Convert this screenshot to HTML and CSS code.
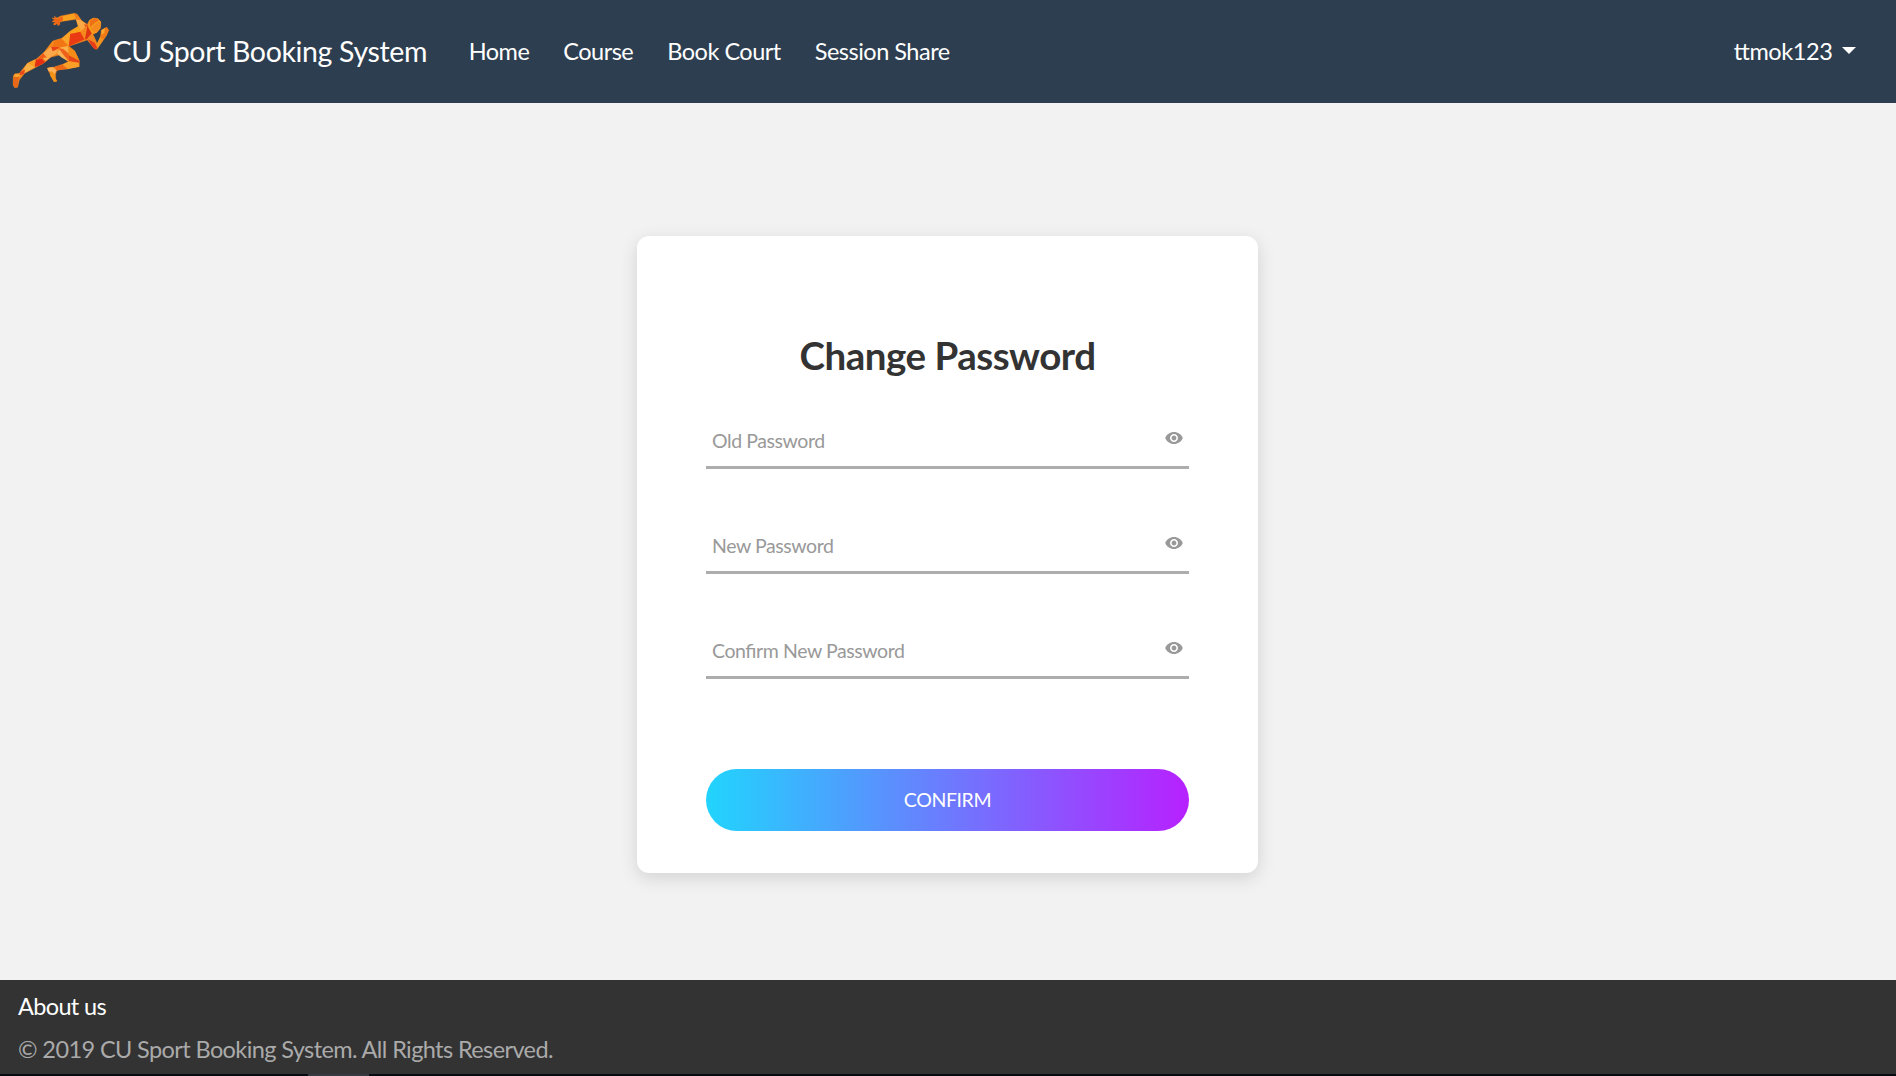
FILE: index.html
```html
<!DOCTYPE html>
<html lang="en">
<head>
<meta charset="utf-8">
<title>Change Password</title>
<link rel="stylesheet" href="styles.css">
</head>
<body>
<header class="navbar">
  <a class="brand">
    <svg class="logo" viewBox="0 0 338 309" aria-hidden="true">
      <path fill="#f5871c" stroke="#f5871c" stroke-width="1" stroke-linejoin="round" d="M156 54L166 55L163 49L171 54L182 48L222 40L231 42L246 63L262 73L268 61L280 54L294 56L303 66L301 85L290 98L279 103L286 118L292 132L301 111L304 90L312 86L320 82L326 91L320 106L311 119L291 148L282 145L262 120L207 139L224 152L238 182L238 200L180 209L170 212L167 222L167 235L171 244L162 245L146 214L142 204L163 201L188 193L205 185L178 165L152 172L126 192L104 204L74 220L58 240L53 262L44 263L39 254L40 227L45 221L58 220L82 190L108 178L132 157L158 123L185 115L212 92L235 79L228 58L188 64L179 67L179 73L174 77L172 70L164 75L160 72L167 66L156 65L165 60Z"/>
      <g>
        <path fill="#f9a01f" d="M182 50L222 41L229 43L226 57L186 64Z"/>
        <path fill="#ef6516" d="M155 54L165 57L163 49L171 57L188 49L189 60L179 66L180 73L175 77L173 69L166 75L161 73L168 65L156 64L165 59Z"/>
        <path fill="#f47b1c" d="M222 41L230 42L244 62L233 67Z"/>
        <path fill="#fba944" d="M228 58L244 61L261 75L243 94L235 82Z"/>
        <path fill="#e8531b" d="M252 73L264 74L278 86L271 91L260 88Z"/>
        <path fill="#f59a1c" d="M264 75L268 61L280 54L294 56L303 66L301 85L290 98L276 101L266 93Z"/>
        <path fill="#f07018" d="M269 63L284 54L298 60L285 68L270 82Z"/>
        <path fill="#f58a1f" d="M272 88L291 68L302 67L300 84L289 98Z"/>
        <path fill="#fba31b" d="M212 93L235 79L245 92L239 98L213 99Z"/>
        <path fill="#e93a13" d="M208 103L241 95L255 118L207 139Z"/>
        <path fill="#f5881e" d="M242 97L262 76L264 91L254 119Z"/>
        <path fill="#df3513" d="M262 78L276 101L261 118L255 118Z"/>
        <path fill="#f8a52a" d="M185 116L212 92L206 137Z"/>
        <path fill="#f37615" d="M158 139L166 121L185 116L204 138L177 144Z"/>
        <path fill="#fbb24b" d="M174 144L204 138L207 161L190 148Z"/>
        <path fill="#e94216" d="M154 140L180 142L158 155L151 153Z"/>
        <path fill="#fba84a" d="M130 159L153 140L158 154L175 147L168 162L151 172L127 174Z"/>
        <path fill="#f0601b" d="M176 145L190 147L207 162L206 181L180 155Z"/>
        <path fill="#fbb152" d="M170 160L178 148L205 184L184 172Z"/>
        <path fill="#f58c17" d="M205 138L226 156L238 182L206 165Z"/>
        <path fill="#e64519" d="M206 166L239 183L238 190L207 184Z"/>
        <path fill="#f99e27" d="M207 184L236 188L237 200L202 208L180 207L188 194Z"/>
        <path fill="#ef6818" d="M188 194L203 207L169 211L165 200Z"/>
        <path fill="#fbb159" d="M142 204L157 201L169 211L163 225L154 216L145 213Z"/>
        <path fill="#f39418" d="M154 213L164 221L166 236L171 244L162 245L150 226Z"/>
        <path fill="#ef5b17" d="M130 160L145 179L125 194L112 178Z"/>
        <path fill="#fbb14a" d="M128 174L153 171L136 184Z"/>
        <path fill="#e52f15" d="M108 179L126 177L133 187L117 197L103 201Z"/>
        <path fill="#fa9f22" d="M82 190L106 178L104 202L88 208L73 210Z"/>
        <path fill="#f7b045" d="M73 203L83 190L105 202L73 220Z"/>
        <path fill="#e9481a" d="M60 216L75 209L72 222L60 226Z"/>
        <path fill="#f9a42e" d="M43 222L57 222L61 232L45 238Z"/>
        <path fill="#e76818" d="M40 232L60 230L55 240L54 260L45 263L39 256Z"/>
        <path fill="#f08724" d="M261 117L275 100L284 114L276 127Z"/>
        <path fill="#e73c19" d="M264 118L284 128L292 144L286 149L276 139Z"/>
        <path fill="#f4951f" d="M290 132L301 110L310 117L293 144Z"/>
        <path fill="#f17a18" d="M301 111L313 85L321 82L326 91L320 105L309 119Z"/>
        <path fill="#fba82e" d="M304 91L315 84L313 98L306 105Z"/>
      </g>
    </svg>
    <span class="brand-name">CU Sport Booking System</span>
  </a>
  <nav class="links">
    <a>Home</a><a>Course</a><a>Book Court</a><a>Session Share</a>
  </nav>
  <a class="user">ttmok123<span class="caret"></span></a>
</header>
<main class="content">
  <form class="card">
    <h1 class="title">Change Password</h1>
    <label class="field"><span class="label">Old Password</span>
      <svg class="eye" viewBox="1 4.5 22 15"><path d="M12 4.5C7 4.5 2.73 7.61 1 12c1.73 4.39 6 7.5 11 7.5s9.27-3.11 11-7.5c-1.73-4.39-6-7.5-11-7.5zM12 17c-2.76 0-5-2.24-5-5s2.24-5 5-5 5 2.24 5 5-2.24 5-5 5zm0-8c-1.66 0-3 1.34-3 3s1.34 3 3 3 3-1.34 3-3-1.34-3-3-3z"/></svg></label>
    <label class="field"><span class="label">New Password</span>
      <svg class="eye" viewBox="1 4.5 22 15"><path d="M12 4.5C7 4.5 2.73 7.61 1 12c1.73 4.39 6 7.5 11 7.5s9.27-3.11 11-7.5c-1.73-4.39-6-7.5-11-7.5zM12 17c-2.76 0-5-2.24-5-5s2.24-5 5-5 5 2.24 5 5-2.24 5-5 5zm0-8c-1.66 0-3 1.34-3 3s1.34 3 3 3 3-1.34 3-3-1.34-3-3-3z"/></svg></label>
    <label class="field"><span class="label">Confirm New Password</span>
      <svg class="eye" viewBox="1 4.5 22 15"><path d="M12 4.5C7 4.5 2.73 7.61 1 12c1.73 4.39 6 7.5 11 7.5s9.27-3.11 11-7.5c-1.73-4.39-6-7.5-11-7.5zM12 17c-2.76 0-5-2.24-5-5s2.24-5 5-5 5 2.24 5 5-2.24 5-5 5zm0-8c-1.66 0-3 1.34-3 3s1.34 3 3 3 3-1.34 3-3-1.34-3-3-3z"/></svg></label>
    <button class="confirm" type="button">CONFIRM</button>
  </form>
</main>
<footer class="footer">
  <a class="about">About us</a>
  <p class="copyright">© 2019 CU Sport Booking System. All Rights Reserved.</p>
</footer>
<div class="edge"><div class="edge-tab"></div></div>
</body>
</html>
```
FILE: styles.css
```css
* { box-sizing: border-box; }
body {
  margin: 0;
  height: 1076px;
  display: flex;
  flex-direction: column;
  overflow: hidden;
  background: #f2f2f2;
  font-family: Lato, sans-serif;
  font-size: 23.5px;
  letter-spacing: -0.5px;
  font-feature-settings: "liga" 1;
}
.navbar {
  height: 103px;
  display: flex;
  align-items: center;
  background: #2d3e50;
  color: #fff;
  padding-right: 40px;
}
.brand { display: flex; align-items: center; }
.logo { width: 112.67px; height: 103px; }
.brand-name { padding-bottom: 2px; font-size: 28.5px; line-height: 36px; letter-spacing: -0.35px; white-space: nowrap; width: 314px; }
.links { display: flex; gap: 34px; margin-left: 42px; padding-bottom: 2px; white-space: nowrap; }
.user { margin-left: auto; display: flex; align-items: center; gap: 9.5px; padding-bottom: 2px; letter-spacing: -0.4px; }
.caret {
  border: 7px solid transparent;
  border-top-color: #fff;
  border-bottom: 0;
}
.content { flex: 1; display: flex; justify-content: center; align-items: flex-start; padding-top: 133px; }
.card {
  width: 621px;
  height: 637px;
  margin-right: 1px;
  padding: 93px 69px 0;
  background: #fff;
  border-radius: 12px;
  box-shadow: 0 5px 18px rgba(0, 0, 0, 0.13);
}
.title {
  margin: 0;
  height: 53px;
  line-height: 53px;
  font-size: 38.5px;
  font-weight: 700;
  letter-spacing: -0.48px;
  color: #333;
  text-align: center;
}
.field {
  display: flex;
  justify-content: space-between;
  align-items: flex-start;
  height: 58px;
  margin-top: 47px;
  padding: 17px 6px 0;
  border-bottom: 3px solid #adadad;
  color: #999;
}
.title + .field { margin-top: 29px; }
.label { font-size: 19.5px; line-height: 26px; letter-spacing: -0.42px; }
.eye { width: 18px; height: 12px; margin-top: 4px; fill: #999; }
.confirm {
  display: block;
  width: 100%;
  height: 62px;
  margin-top: 90px;
  padding: 0 0 2px;
  border: 0;
  border-radius: 31px;
  background: linear-gradient(to right, #21d4fd, #b721ff);
  color: #fff;
  font: 19.5px Lato, sans-serif;
  letter-spacing: -0.4px;
}
.footer { height: 94px; padding: 5px 18px; background: #333; color: #fff; }
.about { display: block; line-height: 43px; letter-spacing: -0.65px; }
.copyright { margin: 0; line-height: 43px; letter-spacing: -0.6px; color: #aaa; }
.edge { height: 2px; background: #060b12; }
.edge-tab { width: 61px; height: 2px; margin-left: 308px; background: #343a42; }
```
